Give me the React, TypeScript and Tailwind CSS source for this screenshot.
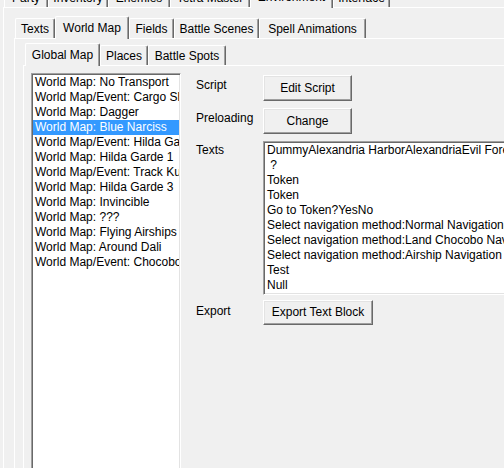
import React from "react";

type Tab = { label: string; w: string };

const tabBase =
  "flex justify-center whitespace-nowrap border-t border-l border-white border-r border-r-[#696969] shadow-[inset_-1px_0_0_#a0a0a0] rounded-t-[2px]";

function TabStrip({ tabs, selected, className }: { tabs: Tab[]; selected: number; className: string }) {
  return (
    <div className={`flex h-[22px] items-end ${className}`}>
      {tabs.map((t, i) =>
        i === selected ? (
          <div key={t.label} className={`${tabBase} ${t.w} relative z-10 -mb-[1px] h-[23px] bg-[#f0f0f0] pt-[4px]`}>
            {t.label}
          </div>
        ) : (
          <div key={t.label} className={`${tabBase} ${t.w} h-[20px] pt-[3px]`}>
            {t.label}
          </div>
        )
      )}
    </div>
  );
}

const topTabs: Tab[] = [
  { label: "Party", w: "w-[44px]" },
  { label: "Inventory", w: "w-[60px]" },
  { label: "Enemies", w: "w-[62px]" },
  { label: "Tetra Master", w: "w-[80px]" },
  { label: "Environment", w: "w-[83px]" },
  { label: "Interface", w: "w-[57px]" },
];

const envTabs: Tab[] = [
  { label: "Texts", w: "w-[40px]" },
  { label: "World Map", w: "w-[74px]" },
  { label: "Fields", w: "w-[45px]" },
  { label: "Battle Scenes", w: "w-[85px]" },
  { label: "Spell Animations", w: "w-[107px]" },
];

const mapTabs: Tab[] = [
  { label: "Global Map", w: "w-[75px]" },
  { label: "Places", w: "w-[48px]" },
  { label: "Battle Spots", w: "w-[78px]" },
];

const entries = [
  "World Map: No Transport",
  "World Map/Event: Cargo Ship",
  "World Map: Dagger",
  "World Map: Blue Narciss",
  "World Map/Event: Hilda Garde 2",
  "World Map: Hilda Garde 1",
  "World Map/Event: Track Kuja",
  "World Map: Hilda Garde 3",
  "World Map: Invincible",
  "World Map: ???",
  "World Map: Flying Airships",
  "World Map: Around Dali",
  "World Map/Event: Chocobo's Forest",
];

const textLines = [
  "DummyAlexandria HarborAlexandriaEvil Forest",
  " ?",
  "Token",
  "Token",
  "Go to Token?YesNo",
  "Select navigation method:Normal Navigation",
  "Select navigation method:Land Chocobo Navigation",
  "Select navigation method:Airship Navigation",
  "Test",
  "Null",
];

const sunken =
  "border border-t-[#a0a0a0] border-l-[#a0a0a0] border-r-white border-b-white shadow-[inset_1px_1px_0_#696969,inset_-1px_-1px_0_#e3e3e3] bg-white";

const raised =
  "flex items-center justify-center border border-t-white border-l-white border-r-[#696969] border-b-[#696969] shadow-[inset_-1px_-1px_0_#a0a0a0,inset_1px_1px_0_#e3e3e3] bg-[#f0f0f0] whitespace-nowrap";

export default function App() {
  return (
    <div className="h-[468px] w-[504px] overflow-hidden bg-[#f0f0f0] font-['Liberation_Sans',Arial,sans-serif] text-[12px] leading-[15px] text-black">
      <div className="-mt-[15px] ml-[3px]">
        <TabStrip tabs={topTabs} selected={4} className="pl-[1px]" />
        <div className="border-l border-t border-white pl-[10px] pt-[8px]">
          <TabStrip tabs={envTabs} selected={1} className="pl-[1px]" />
          <div className="border-l border-t border-white pl-[8px] pt-[4px]">
            <TabStrip tabs={mapTabs} selected={0} className="pl-[2px]" />
            <div className="flex items-start border-l border-t border-white pl-[7px] pt-[7px]">
              <div className={`${sunken} h-[420px] w-[150px] shrink-0 overflow-hidden p-[1px]`}>
                {entries.map((e, i) => (
                  <div
                    key={e}
                    className={`h-[15px] overflow-hidden whitespace-nowrap pl-[2px] ${
                      i === 3 ? "bg-[#3399ff] text-white" : ""
                    }`}
                  >
                    {e}
                  </div>
                ))}
              </div>
              <div className="ml-[15px] mt-[2px] grid shrink-0 grid-cols-[67px_320px] content-start">
                <div className="pt-[3px]">Script</div>
                <div className={`${raised} h-[26px] w-[89px]`}>Edit Script</div>

                <div className="mt-[7px] pt-[3px]">Preloading</div>
                <div className={`${raised} mt-[7px] h-[26px] w-[89px]`}>Change</div>

                <div className="mt-[7px] pt-[2px]">Texts</div>
                <div className={`${sunken} mt-[7px] h-[154px] overflow-hidden p-[1px] pl-[3px]`}>
                  {textLines.map((l, i) => (
                    <div key={i} className="h-[15px] whitespace-pre">
                      {l}
                    </div>
                  ))}
                </div>

                <div className="mt-[5px] pt-[4px]">Export</div>
                <div className={`${raised} mt-[5px] h-[25px] w-[110px]`}>Export Text Block</div>
              </div>
            </div>
          </div>
        </div>
      </div>
    </div>
  );
}
